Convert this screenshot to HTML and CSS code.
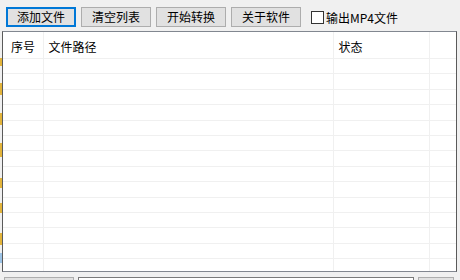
FILE: index.html
```html
<!DOCTYPE html>
<html lang="zh-CN">
<head>
  <meta charset="UTF-8" />
  <title>视频转换</title>
  <link rel="stylesheet" href="styles.css">
</head>
<body>
<div class="app">
  <div class="edge"></div>
  <div class="main">
    <div class="toolbar">
      <button class="btn default">添加文件</button>
      <button class="btn">清空列表</button>
      <button class="btn">开始转换</button>
      <button class="btn">关于软件</button>
      <label class="check"><input type="checkbox">输出MP4文件</label>
    </div>

    <div class="list">
      <table class="grid">
        <colgroup>
          <col class="c-no"><col class="c-path"><col class="c-state"><col>
        </colgroup>
        <thead>
          <tr><th>序号</th><th>文件路径</th><th>状态</th><th></th></tr>
        </thead>
        <tbody>
          <tr><td></td><td></td><td></td><td></td></tr>
          <tr><td></td><td></td><td></td><td></td></tr>
          <tr><td></td><td></td><td></td><td></td></tr>
          <tr><td></td><td></td><td></td><td></td></tr>
          <tr><td></td><td></td><td></td><td></td></tr>
          <tr><td></td><td></td><td></td><td></td></tr>
          <tr><td></td><td></td><td></td><td></td></tr>
          <tr><td></td><td></td><td></td><td></td></tr>
          <tr><td></td><td></td><td></td><td></td></tr>
          <tr><td></td><td></td><td></td><td></td></tr>
          <tr><td></td><td></td><td></td><td></td></tr>
          <tr><td></td><td></td><td></td><td></td></tr>
          <tr><td></td><td></td><td></td><td></td></tr>
          <tr><td></td><td></td><td></td><td></td></tr>
        </tbody>
      </table>
    </div>

    <div class="bottom">
      <button class="btn small-left"></button>
      <div class="field"></div>
      <button class="btn small-right"></button>
    </div>
  </div>
</div>
</body>
</html>
```

FILE: styles.css
```css
html, body {
  margin: 0;
  padding: 0;
}
body {
  width: 460px;
  height: 280px;
  overflow: hidden;
  background: #f0f0f0;
  font-family: "Noto Sans CJK SC", "Liberation Sans", sans-serif;
  font-size: 12px;
  color: #000;
}
.app {
  display: flex;
  height: 280px;
  overflow: hidden;
}
.edge {
  width: 2px;
  flex: none;
  background: linear-gradient(to bottom,
    #f0f0f0 0, #f0f0f0 58px, #e3b43a 58px, #e3b43a 66px,
    #f0f0f0 66px, #f0f0f0 83px, #e3b43a 83px, #e3b43a 95px,
    #f0f0f0 95px, #f0f0f0 113px, #e3b43a 113px, #e3b43a 125px,
    #f0f0f0 125px, #f0f0f0 143px, #e3b43a 143px, #e3b43a 157px,
    #f0f0f0 157px, #f0f0f0 178px, #e3b43a 178px, #e3b43a 188px,
    #f0f0f0 188px, #f0f0f0 203px, #e3b43a 203px, #e3b43a 213px,
    #f0f0f0 213px, #f0f0f0 233px, #e3b43a 233px, #e3b43a 245px,
    #f0f0f0 245px, #f0f0f0 253px, #9cc3e6 253px, #9cc3e6 263px,
    #f0f0f0 263px);
}
.main {
  flex: 1;
  display: flex;
  flex-direction: column;
}
.toolbar {
  flex: none;
  display: flex;
  align-items: flex-start;
  gap: 5px;
  height: 31px;
  padding: 7px 0 0 4px;
  box-sizing: border-box;
}
.btn {
  width: 70px;
  height: 20px;
  padding: 0;
  background: #e1e1e1;
  border: 1px solid #adadad;
  font-family: inherit;
  font-size: 12px;
  line-height: 18px;
  color: #000;
}
.btn.default {
  border: 2px solid #0078d7;
  line-height: 16px;
}
.check {
  display: flex;
  align-items: center;
  height: 20px;
  margin-left: 5px;
}
.check input {
  appearance: none;
  width: 13px;
  height: 13px;
  margin: 0 2px 0 0;
  border: 1px solid #333;
  background: #fff;
}
.list {
  flex: none;
  width: 455px;
  height: 241px;
  box-sizing: border-box;
  border: 1px solid #828790;
  border-left-color: #5a5a5a;
  border-right-color: #5a5a5a;
  background: #fff;
  overflow: hidden;
}
.grid {
  width: 453px;
  border-collapse: collapse;
  table-layout: fixed;
}
.c-no { width: 40px; }
.c-path { width: 290px; }
.c-state { width: 96px; }
.grid th {
  height: 24px;
  padding: 2px 0 0 5px;
  text-align: left;
  font-weight: normal;
  border-right: 1px solid #f0f0f0;
  border-bottom: 1px solid #f0f0f0;
}
.grid th:first-child {
  padding-left: 8px;
}
.grid td {
  height: 14.4px;
  padding: 0;
  border-right: 1px solid #f0f0f0;
  border-bottom: 1px solid #f0f0f0;
}
.grid th:last-child, .grid td:last-child {
  border-right: none;
}
/* window is cut off here, only the top of the bottom row shows */
.bottom {
  flex: none;
  display: flex;
  align-items: flex-start;
  gap: 4px;
  height: 3px;
  margin-top: 5px;
  padding-left: 2px;
  overflow: hidden;
}
.btn.small-left {
  flex: none;
  width: 70px;
  height: 20px;
}
.field {
  flex: none;
  width: 336px;
  height: 20px;
  box-sizing: border-box;
  border: 1px solid #7a7a7a;
  background: #fff;
}
.btn.small-right {
  flex: none;
  width: 36px;
  height: 20px;
}
```
